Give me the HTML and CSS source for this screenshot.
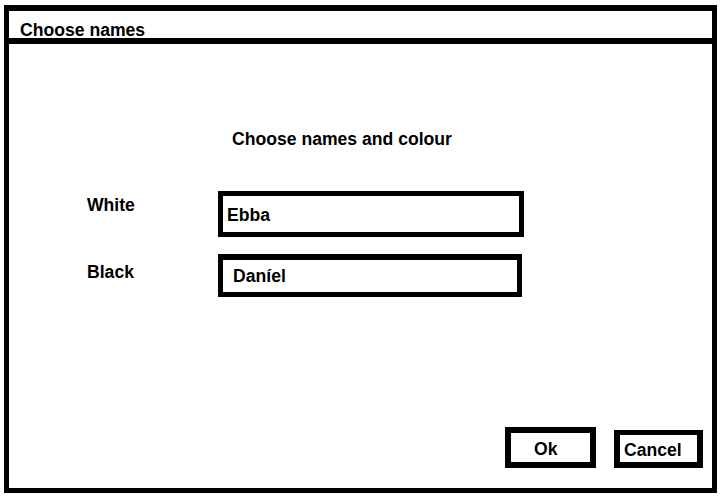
FILE: index.html
```html
<!DOCTYPE html>
<html>
<head>
<meta charset="utf-8">
<link rel="stylesheet" href="styles.css">
</head>
<body>
<div class="window">
  <div class="titlebar">Choose names</div>
  <div class="content">
    <div class="heading">Choose names and colour</div>
    <div class="form">
      <div class="label label-white">White</div>
      <div class="field field-white">Ebba</div>
      <div class="label label-black">Black</div>
      <div class="field field-black">Daníel</div>
    </div>
    <div class="spacer"></div>
    <div class="buttons">
      <div class="btn btn-ok">Ok</div>
      <div class="btn btn-cancel">Cancel</div>
    </div>
  </div>
</div>
</body>
</html>
```
FILE: styles.css
```css
* { box-sizing: border-box; }
html, body { margin: 0; padding: 0; background: #fff; }
body {
  font-family: "Liberation Sans", Arial, sans-serif;
  font-weight: bold;
  font-size: 17.6px;
  line-height: 20px;
  color: #000;
}
.window {
  margin: 5px 0 0 4px;
  width: 713px;
  height: 488px;
  border: 5px solid #000;
  border-top-width: 6px;
  display: flex;
  flex-direction: column;
}
.titlebar {
  height: 33px;
  border-bottom: 6px solid #000;
  padding: 9px 0 0 11px;
}
.content {
  flex: 1;
  display: flex;
  flex-direction: column;
  padding: 85px 9px 20px 0;
}
.heading {
  margin-left: 223px;
}
.form {
  margin-top: 42px;
  display: grid;
  grid-template-columns: 131px auto;
  grid-template-rows: 46px 43px;
  row-gap: 17px;
  align-items: start;
  justify-items: start;
  padding-left: 78px;
}
.label-white { margin-top: 4px; }
.label-black { margin-top: 8px; }
.field {
  border: 5px solid #000;
}
.field-white {
  width: 306px;
  height: 46px;
  padding: 9px 0 0 4px;
}
.field-black {
  width: 304px;
  height: 43px;
  border-top-width: 6px;
  padding: 6px 0 0 10px;
}
.spacer { flex: 1; }
.buttons {
  display: flex;
  justify-content: flex-end;
  align-items: flex-end;
  gap: 18px;
}
.btn {
  border: 6px solid #000;
  padding-top: 6px;
}
.btn-ok {
  width: 91px;
  height: 41px;
  padding-left: 23px;
}
.btn-cancel {
  width: 89px;
  height: 38px;
  border-top-width: 5px;
  padding-left: 4px;
  padding-top: 5px;
}
```
